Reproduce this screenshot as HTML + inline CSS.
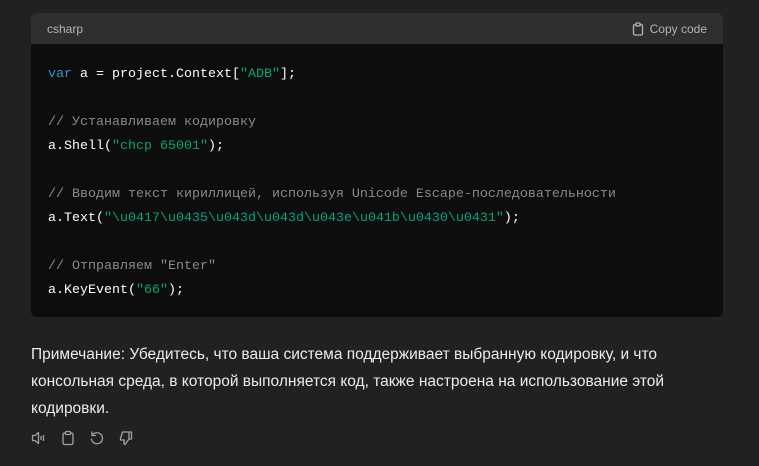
<!DOCTYPE html>
<html><head><meta charset="utf-8"><style>
body{margin:0;background:#212121;width:759px;height:466px;overflow:hidden;font-family:"Liberation Sans",sans-serif;}
.block{position:absolute;left:31px;top:13px;width:692px;height:304px;border-radius:6px;overflow:hidden;background:#0d0d0d;}
.hd{height:31px;background:#2f2f2f;color:#b4b4b4;font-size:12px;display:flex;align-items:center;justify-content:space-between;padding:0 16px;}
.cp{display:flex;align-items:center;gap:5px;}
pre{margin:0;padding:19px 17px;font-family:"Liberation Mono",monospace;font-size:13.33px;line-height:24px;color:#fff;}
.k{color:#2e95d3}.s{color:#00a67d}.c{color:#8a8a8a}
p{position:absolute;left:31px;top:341px;width:700px;margin:0;color:#ececec;font-size:15.5px;line-height:27px;}
.ic{position:absolute;top:430px;left:31px;display:flex;gap:13px;}
</style></head><body>
<div class="block">
<div class="hd"><span>csharp</span><span class="cp"><svg width="14" height="14" viewBox="0 0 14 14" fill="none" stroke="#b4b4b4" stroke-width="1.3"><rect x="2.5" y="2.5" width="9" height="10.5" rx="1.5"/><rect x="5" y="1" width="4" height="3" rx="0.8" fill="#2f2f2f"/></svg>Copy code</span></div>
<pre><span class="k">var</span> a = project.Context[<span class="s">"ADB"</span>];

<span class="c">// Устанавливаем кодировку</span>
a.Shell(<span class="s">"chcp 65001"</span>);

<span class="c">// Вводим текст кириллицей, используя Unicode Escape-последовательности</span>
a.Text(<span class="s">"\u0417\u0435\u043d\u043d\u043e\u041b\u0430\u0431"</span>);

<span class="c">// Отправляем "Enter"</span>
a.KeyEvent(<span class="s">"66"</span>);</pre>
</div>
<p>Примечание: Убедитесь, что ваша система поддерживает выбранную кодировку, и что консольная среда, в которой выполняется код, также настроена на использование этой кодировки.</p>
<div class="ic">
<svg width="16" height="16" viewBox="0 0 16 16" fill="none" stroke="#a0a0a0" stroke-width="1.3" stroke-linejoin="round"><path d="M1.5 5.5h2.5l3.5-3v11l-3.5-3H1.5z"/><path d="M10 6v4M12.5 5v6"/></svg>
<svg width="16" height="16" viewBox="0 0 16 16" fill="none" stroke="#a0a0a0" stroke-width="1.3"><rect x="3" y="3" width="10" height="11.5" rx="1.5"/><rect x="5.5" y="1.5" width="5" height="3" rx="0.8" fill="#212121"/></svg>
<svg width="16" height="16" viewBox="0 0 16 16" fill="none" stroke="#a0a0a0" stroke-width="1.3" stroke-linecap="round"><path d="M3.5 5A5.5 5.5 0 1 1 2.5 9"/><path d="M3 2v3.5h3.5"/></svg>
<svg width="16" height="16" viewBox="0 0 16 16" fill="none" stroke="#a0a0a0" stroke-width="1.3" stroke-linejoin="round"><path d="M11 2H4.5L2.5 8.5v1.5h4l-.7 3.5 1.2 1 4-5.5V2zM11 2h2.5v7H11"/></svg>
</div>
</body></html>
